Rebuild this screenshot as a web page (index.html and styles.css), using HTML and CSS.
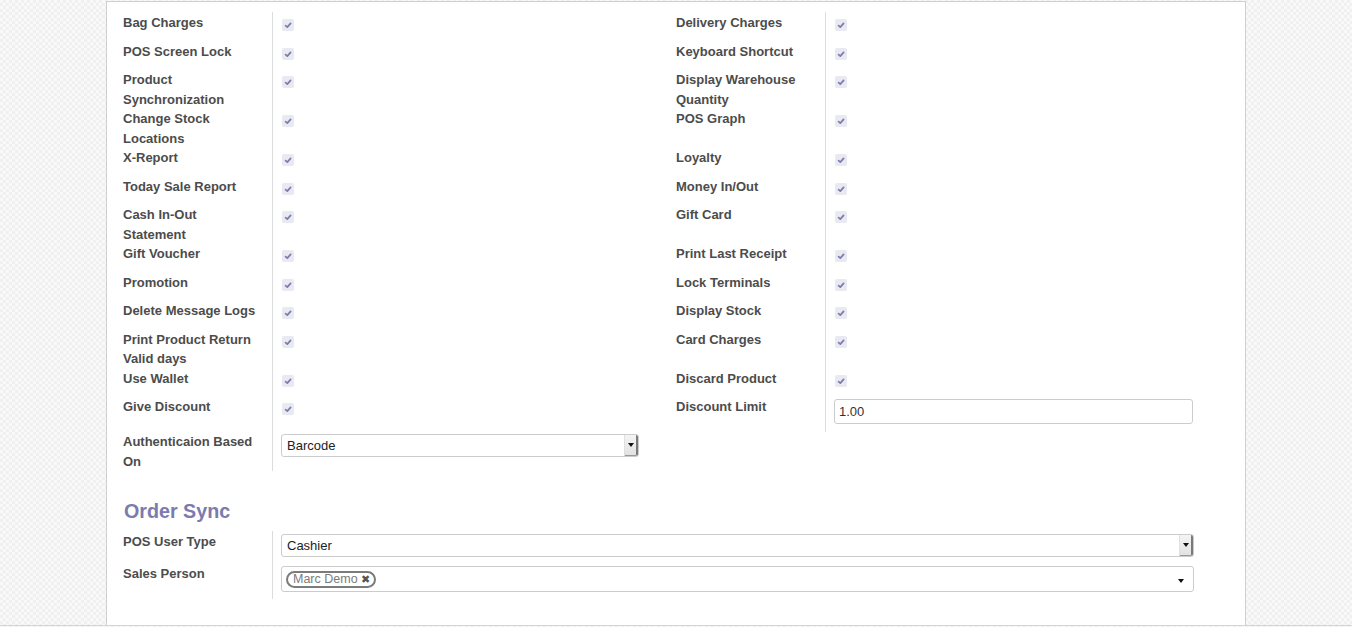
FILE: index.html
```html
<!DOCTYPE html>
<html>
<head>
<meta charset="utf-8">
<link rel="stylesheet" href="styles.css">
</head>
<body>
<div class="sheet">
  <div class="form-grid">
    <div class="lbl">Bag Charges</div><div class="val"><span class="cb"></span></div>
    <div class="lbl">Delivery Charges</div><div class="val"><span class="cb"></span></div>

    <div class="lbl">POS Screen Lock</div><div class="val"><span class="cb"></span></div>
    <div class="lbl">Keyboard Shortcut</div><div class="val"><span class="cb"></span></div>

    <div class="lbl">Product Synchronization</div><div class="val"><span class="cb"></span></div>
    <div class="lbl">Display Warehouse Quantity</div><div class="val"><span class="cb"></span></div>

    <div class="lbl">Change Stock Locations</div><div class="val"><span class="cb"></span></div>
    <div class="lbl">POS Graph</div><div class="val"><span class="cb"></span></div>

    <div class="lbl">X-Report</div><div class="val"><span class="cb"></span></div>
    <div class="lbl">Loyalty</div><div class="val"><span class="cb"></span></div>

    <div class="lbl">Today Sale Report</div><div class="val"><span class="cb"></span></div>
    <div class="lbl">Money In/Out</div><div class="val"><span class="cb"></span></div>

    <div class="lbl">Cash In-Out Statement</div><div class="val"><span class="cb"></span></div>
    <div class="lbl">Gift Card</div><div class="val"><span class="cb"></span></div>

    <div class="lbl">Gift Voucher</div><div class="val"><span class="cb"></span></div>
    <div class="lbl">Print Last Receipt</div><div class="val"><span class="cb"></span></div>

    <div class="lbl">Promotion</div><div class="val"><span class="cb"></span></div>
    <div class="lbl">Lock Terminals</div><div class="val"><span class="cb"></span></div>

    <div class="lbl">Delete Message Logs</div><div class="val"><span class="cb"></span></div>
    <div class="lbl">Display Stock</div><div class="val"><span class="cb"></span></div>

    <div class="lbl">Print Product Return Valid days</div><div class="val"><span class="cb"></span></div>
    <div class="lbl">Card Charges</div><div class="val"><span class="cb"></span></div>

    <div class="lbl">Use Wallet</div><div class="val"><span class="cb"></span></div>
    <div class="lbl">Discard Product</div><div class="val"><span class="cb"></span></div>

    <div class="lbl">Give Discount</div><div class="val"><span class="cb"></span></div>
    <div class="lbl">Discount Limit</div><div class="val val-input"><div class="input">1.00</div></div>

    <div class="lbl">Authenticaion Based On</div><div class="val val-input"><div class="select select-half"><span>Barcode</span><span class="sel-btn"><span class="tri"></span></span></div></div>
    <div class="empty"></div><div class="empty"></div>
  </div>

  <h2 class="section-title">Order Sync</h2>

  <div class="sync-grid">
    <div class="lbl lbl-sync">POS User Type</div>
    <div class="val val-sel"><div class="select"><span>Cashier</span><span class="sel-btn"><span class="tri"></span></span></div></div>
    <div class="lbl lbl-sync">Sales Person</div>
    <div class="val val-tags"><div class="tags-field"><span class="tag">Marc Demo <span class="tag-x">✖</span></span><span class="tri tri-plain"></span></div></div>
  </div>
</div>
<div class="page-line"></div>
</body>
</html>
```
FILE: styles.css
```css
html, body {
  margin: 0;
  padding: 0;
}
body {
  font-family: "Liberation Sans", Arial, sans-serif;
  font-size: 13px;
  color: #333;
  background-color: #f9f9f9;
  background-image:
    linear-gradient(45deg, #f0f0f0 25%, transparent 25%, transparent 75%, #f0f0f0 75%),
    linear-gradient(45deg, #f0f0f0 25%, transparent 25%, transparent 75%, #f0f0f0 75%);
  background-size: 6px 6px;
  background-position: 0 0, 3px 3px;
  height: 627px;
  overflow: hidden;
}
.sheet {
  box-sizing: border-box;
  width: 1140px;
  margin: 1px auto 0;
  background: #fff;
  border: 1px solid #cfcfcf;
  border-bottom: none;
  padding: 10px 51px 27px 16px;
}
.form-grid {
  display: grid;
  grid-template-columns: 150px 403px 150px 1fr;
  grid-auto-rows: minmax(28.5px, auto);
}
.lbl {
  box-sizing: border-box;
  font-weight: bold;
  color: #4c4c4c;
  line-height: 19.5px;
  padding-top: 1px;
  margin-bottom: -1px;
  padding-right: 12px;
  border-right: 1px solid #dcdcdc;
}
.val {
  padding-left: 8px;
}
.cb {
  display: block;
  width: 12px;
  height: 12px;
  margin-top: 7px;
  margin-left: 1px;
  border-radius: 2px;
  background: #e9e9f1 url("data:image/svg+xml,%3Csvg xmlns='http://www.w3.org/2000/svg' width='12' height='12'%3E%3Cpath d='M3.6 6.6 L5.3 8.1 L8.6 4.4' fill='none' stroke='%237c7bad' stroke-width='1.7' stroke-linecap='round' stroke-linejoin='round'/%3E%3C/svg%3E") no-repeat center;
}
.val-input {
  padding-top: 3px;
}
.input {
  box-sizing: border-box;
  height: 25px;
  width: 359px;
  border: 1px solid #ccc;
  border-radius: 3px;
  padding: 0 4px;
  line-height: 23px;
  color: #333;
  margin-bottom: 7px;
}
.select {
  box-sizing: border-box;
  display: flex;
  align-items: stretch;
  justify-content: space-between;
  height: 23px;
  border: 1px solid #ccc;
  border-radius: 3px;
  padding-left: 5px;
  line-height: 21px;
  color: #222;
}
.select-half {
  width: 358px;
}
.sel-btn {
  width: 11px;
  background: linear-gradient(#f4f4f4, #e2e2e2);
  border-left: 1px solid #e0e0e0;
  border-right: 2px solid #7a7a7a;
  border-bottom: 1px solid #9a9a9a;
  border-radius: 0 2px 2px 0;
  display: flex;
  align-items: center;
  justify-content: center;
}
.tri {
  display: block;
  width: 0;
  height: 0;
  border-left: 3px solid transparent;
  border-right: 3px solid transparent;
  border-top: 4px solid #111;
}
.section-title {
  margin: 27px 0 6px 1px;
  font-size: 19.7px;
  line-height: 28px;
  font-weight: bold;
  color: #7c7bad;
}
.sync-grid {
  display: grid;
  grid-template-columns: 150px 1fr;
}
.val-sel {
  padding-top: 3px;
  padding-bottom: 6px;
}
.val-tags {
  padding-top: 3px;
  padding-bottom: 6px;
}
.tags-field {
  box-sizing: border-box;
  height: 26px;
  border: 1px solid #ccc;
  border-radius: 3px;
  padding: 0 9px 0 4px;
  display: flex;
  align-items: center;
  justify-content: space-between;
}
.tag {
  box-sizing: border-box;
  height: 17px;
  border: 2px solid #7b7b7b;
  border-radius: 9px;
  padding: 0 4px 0 5px;
  line-height: 13px;
  font-size: 12.5px;
  color: #7b7b7b;
  margin-top: 1px;
}
.tag-x {
  color: #555;
  font-size: 11px;
  font-family: "DejaVu Sans", sans-serif;
  font-weight: bold;
}
.tri-plain {
  margin-top: 3px;
}
.page-line {
  position: absolute;
  left: 0;
  top: 625px;
  width: 100%;
  height: 1px;
  background: #d4d4d4;
}
```
